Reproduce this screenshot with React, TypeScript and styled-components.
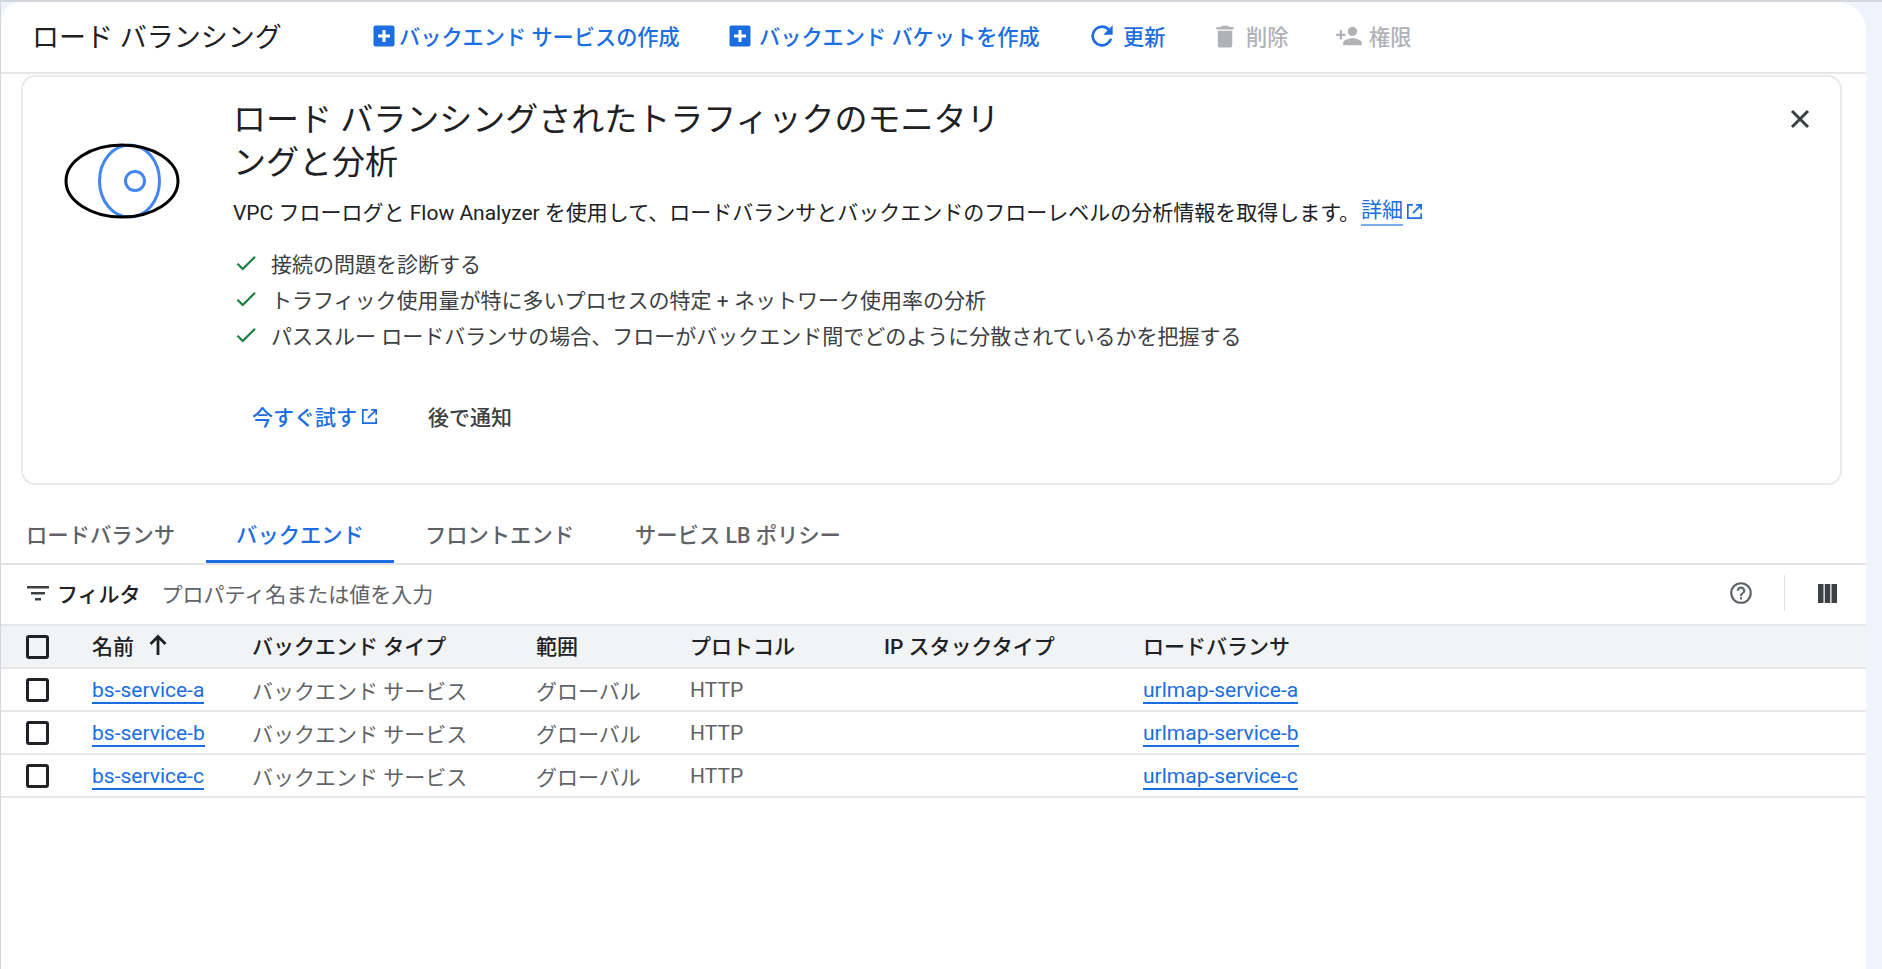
import React from 'react';
import styled, { createGlobalStyle } from 'styled-components';

const GlobalStyle = createGlobalStyle`
  html, body {
    margin: 0;
    padding: 0;
    height: 100%;
    background: #eef3fc;
    overflow: hidden;
  }
  #root {
    height: 100%;
  }
  * {
    box-sizing: border-box;
  }
`;

const FONT = `Roboto, 'Noto Sans CJK JP', sans-serif`;
const BLUE = '#1a6ee0';

const Shell = styled.div`
  height: 969px;
  border-top: 2px solid #d3d6db;
  border-left: 1px solid #d3d6db;
`;

const Page = styled.div`
  width: 1865px;
  height: 100%;
  background: #fff;
  border-top-left-radius: 20px;
  border-top-right-radius: 28px;
  font-family: ${FONT};
  color: #202124;
`;

const Header = styled.div`
  display: flex;
  align-items: center;
  height: 72px;
  padding: 0 0 3px 31px;
  border-bottom: 2px solid #e6e7e9;
`;

const PageTitle = styled.h1`
  margin: 0;
  width: 341px;
  font-size: 27px;
  font-weight: 400;
`;

const HeaderButton = styled.div<{ $disabled?: boolean; $gap?: number; $width: number }>`
  display: flex;
  align-items: center;
  width: ${(p) => p.$width}px;
  gap: ${(p) => p.$gap ?? 8}px;
  font-size: 21.2px;
  font-weight: 500;
  color: ${(p) => (p.$disabled ? '#b0b2b6' : BLUE)};
  white-space: nowrap;
`;

const Banner = styled.section`
  position: relative;
  display: flex;
  width: 1821px;
  height: 410px;
  margin: 1px 0 0 20px;
  border: 2px solid #e8eaed;
  border-radius: 14px;
`;

const EyeSlot = styled.div`
  width: 210px;
  padding: 66px 0 0 41px;
`;

const BannerBody = styled.div`
  padding-top: 21px;
`;

const BannerTitle = styled.h2`
  margin: 0;
  width: 790px;
  font-size: 33px;
  font-weight: 400;
  line-height: 43px;
`;

const Description = styled.p`
  display: flex;
  align-items: center;
  margin: 11px 0 0;
  height: 32px;
  font-size: 21px;
  white-space: nowrap;
`;

const InlineLink = styled.a`
  margin: 0 4px 0 1px;
  color: ${BLUE};
  border-bottom: 2px solid #7eaaf0;
  line-height: 27px;
`;

const CheckList = styled.ul`
  list-style: none;
  margin: 18px 0 0;
  padding: 0;
`;

const CheckItem = styled.li`
  display: flex;
  align-items: center;
  gap: 12px;
  height: 36px;
  font-size: 21px;
  color: #3c4043;
  white-space: nowrap;
`;

const ActionRow = styled.div`
  display: flex;
  align-items: center;
  margin: 45px 0 0 19px;
  height: 36px;
  font-size: 21px;
  font-weight: 500;
`;

const TryLink = styled.a`
  display: flex;
  align-items: center;
  gap: 5px;
  width: 176px;
  color: ${BLUE};
`;

const Later = styled.span`
  color: #3c4043;
`;

const CloseButton = styled.button`
  position: absolute;
  top: 32px;
  right: 30px;
  display: flex;
  padding: 0;
  border: none;
  background: none;
`;

const Tabs = styled.div`
  display: flex;
  height: 80px;
  align-items: flex-end;
  border-bottom: 2px solid #e0e2e5;
`;

const Tab = styled.div<{ $active?: boolean }>`
  display: flex;
  align-items: center;
  height: 46px;
  padding: 0 30.5px 11px;
  font-size: 21.3px;
  font-weight: 500;
  color: ${(p) => (p.$active ? BLUE : '#5f6368')};
  border-bottom: 3px solid ${(p) => (p.$active ? BLUE : 'transparent')};
  white-space: nowrap;

  &:first-child {
    padding-left: 25px;
  }
`;

const FilterBar = styled.div`
  display: flex;
  align-items: center;
  height: 59px;
  padding: 0 0 3px 25px;
`;

const FilterLabel = styled.span`
  margin-left: 7px;
  font-size: 21px;
  font-weight: 500;
`;

const FilterHint = styled.span`
  margin-left: 21px;
  font-size: 21px;
  color: #5f6368;
`;

const FilterTools = styled.div`
  display: flex;
  align-items: center;
  margin-left: auto;
  padding-right: 29px;
`;

const ToolDivider = styled.div`
  width: 1px;
  height: 36px;
  margin: 0 33px 0 30px;
  background: #e0e2e5;
`;

const Table = styled.div`
  border-top: 2px solid #e6e7e9;
`;

const rowColumns = '91px 160px 284px 154px 194px 259px 1fr';

const HeadRow = styled.div`
  display: grid;
  grid-template-columns: ${rowColumns};
  align-items: center;
  height: 43px;
  background: #f1f3f4;
  border-bottom: 2px solid #e6e7e9;
  font-size: 21px;
  font-weight: 500;
`;

const Row = styled.div`
  display: grid;
  grid-template-columns: ${rowColumns};
  align-items: center;
  height: 43px;
  border-bottom: 2px solid #e6e7e9;
  font-size: 21px;
  color: #5f6368;
`;

const HeadCell = styled.div`
  margin-bottom: 3px;
  white-space: nowrap;
`;

const NameHead = styled(HeadCell)`
  display: flex;
  align-items: center;
  gap: 14px;
`;

const CheckCell = styled.div`
  display: flex;
  padding-left: 25px;
`;

const CheckBox = styled.span`
  display: block;
  width: 23px;
  height: 24px;
  border: 3px solid #202124;
  border-radius: 3px;
`;

const RowLink = styled.a`
  justify-self: start;
  margin-top: 4px;
  color: ${BLUE};
  border-bottom: 2px solid ${BLUE};
  line-height: 23px;
`;

const PlusIcon = () => (
  <svg width="22" height="22" viewBox="0 0 22 22">
    <rect x="0.5" y="0.5" width="21" height="21" rx="2" fill={BLUE} />
    <path d="M9.5 5h3v4.5H17v3h-4.5V17h-3v-4.5H5v-3h4.5z" fill="#fff" />
  </svg>
);

const RefreshIcon = () => (
  <svg width="24" height="24" viewBox="3 3 18 18" fill={BLUE}>
    <path d="M17.65 6.35A7.96 7.96 0 0 0 12 4a8 8 0 1 0 7.73 10h-2.08A6 6 0 1 1 12 6c1.66 0 3.14.69 4.22 1.78L13 11h7V4z" />
  </svg>
);

const TrashIcon = () => (
  <svg width="22" height="29" viewBox="3 -1 18 24" fill="#b0b2b6">
    <path d="M6 19c0 1.1.9 2 2 2h8c1.1 0 2-.9 2-2V7H6zM19 4h-3.5l-1-1h-5l-1 1H5v2h14z" />
  </svg>
);

const PersonAddIcon = () => (
  <svg width="28" height="28" viewBox="0 0 24 24" fill="#b0b2b6">
    <path d="M15 12a4 4 0 1 0 0-8 4 4 0 0 0 0 8zm-9-2V7H4v3H1v2h3v3h2v-3h3v-2zm9 4c-2.67 0-8 1.34-8 4v2h16v-2c0-2.66-5.33-4-8-4z" />
  </svg>
);

const EyeArt = () => (
  <svg width="116" height="76" viewBox="0 0 116 76" fill="none">
    <ellipse cx="65.5" cy="38" rx="30" ry="36" stroke="#4285f4" strokeWidth="3" />
    <circle cx="71" cy="38" r="9.5" stroke="#4285f4" strokeWidth="3" />
    <ellipse cx="58" cy="38" rx="56" ry="36" stroke="#000" strokeWidth="3" />
  </svg>
);

const ExternalIcon = () => (
  <svg width="15" height="15" viewBox="3 3 18 18" fill="none" stroke={BLUE} strokeWidth="2">
    <path d="M10 4H4v16h16v-6" />
    <path d="M14 4h6v6M20 4 10 14" />
  </svg>
);

const Check = () => (
  <svg width="26" height="26" viewBox="0 0 24 24" fill="#188038">
    <path d="M9 16.17 4.83 12l-1.42 1.41L9 19 21 7l-1.41-1.41z" />
  </svg>
);

const CloseIcon = () => (
  <svg width="20" height="20" viewBox="0 0 20 20" stroke="#3c4043" strokeWidth="3">
    <path d="M2 2l16 16M18 2 2 18" />
  </svg>
);

const FilterIcon = () => (
  <svg width="24" height="24" viewBox="0 0 24 24" fill="#3c4043">
    <path d="M1 5h22v2.4H1zM5 11h14v2.4H5zM9 17h6v2.4H9z" />
  </svg>
);

const HelpIcon = () => (
  <svg width="26" height="26" viewBox="0 0 24 24" fill="#5f6368">
    <path d="M11 18h2v-2h-2zm1-16a10 10 0 1 0 0 20 10 10 0 0 0 0-20zm0 18a8 8 0 1 1 0-16 8 8 0 0 1 0 16zm0-14a4 4 0 0 0-4 4h2a2 2 0 1 1 4 0c0 2-3 1.75-3 5h2c0-2.25 3-2.5 3-5a4 4 0 0 0-4-4z" />
  </svg>
);

const ColumnsIcon = () => (
  <svg width="19" height="19" viewBox="0 0 19 19" fill="#3c4043">
    <path d="M0 0h5.5v19H0zM6.75 0h5.5v19h-5.5zM13.5 0H19v19h-5.5z" />
  </svg>
);

const ArrowUp = () => (
  <svg width="20" height="22" viewBox="0 0 20 22" fill="none" stroke="#202124" strokeWidth="2.8">
    <path d="M10 21V3M2.5 10 10 2.5 17.5 10" />
  </svg>
);

const CHECK_ITEMS = [
  '接続の問題を診断する',
  'トラフィック使用量が特に多いプロセスの特定 + ネットワーク使用率の分析',
  'パススルー ロードバランサの場合、フローがバックエンド間でどのように分散されているかを把握する',
];

const ROWS = [
  { name: 'bs-service-a', lb: 'urlmap-service-a' },
  { name: 'bs-service-b', lb: 'urlmap-service-b' },
  { name: 'bs-service-c', lb: 'urlmap-service-c' },
];

const App: React.FC = () => {
  return (
    <Shell>
      <GlobalStyle />
      <Page>
        <Header>
          <PageTitle>ロード バランシング</PageTitle>
          <HeaderButton $width={356} $gap={4}>
            <PlusIcon />
            バックエンド サービスの作成
          </HeaderButton>
          <HeaderButton $width={361}>
            <PlusIcon />
            バックエンド バケットを作成
          </HeaderButton>
          <HeaderButton $width={124} $gap={9}>
            <RefreshIcon />
            更新
          </HeaderButton>
          <HeaderButton $width={121} $disabled $gap={10}>
            <TrashIcon />
            削除
          </HeaderButton>
          <HeaderButton $width={100} $disabled $gap={6}>
            <PersonAddIcon />
            権限
          </HeaderButton>
        </Header>
        <Banner>
          <EyeSlot>
            <EyeArt />
          </EyeSlot>
          <BannerBody>
            <BannerTitle>ロード バランシングされたトラフィックのモニタリングと分析</BannerTitle>
            <Description>
              VPC フローログと Flow Analyzer を使用して、ロードバランサとバックエンドのフローレベルの分析情報を取得します。
              <InlineLink>詳細</InlineLink>
              <ExternalIcon />
            </Description>
            <CheckList>
              {CHECK_ITEMS.map((item) => (
                <CheckItem key={item}>
                  <Check />
                  {item}
                </CheckItem>
              ))}
            </CheckList>
            <ActionRow>
              <TryLink>
                今すぐ試す
                <ExternalIcon />
              </TryLink>
              <Later>後で通知</Later>
            </ActionRow>
          </BannerBody>
          <CloseButton>
            <CloseIcon />
          </CloseButton>
        </Banner>
        <Tabs>
          <Tab>ロードバランサ</Tab>
          <Tab $active>バックエンド</Tab>
          <Tab>フロントエンド</Tab>
          <Tab>サービス LB ポリシー</Tab>
        </Tabs>
        <FilterBar>
          <FilterIcon />
          <FilterLabel>フィルタ</FilterLabel>
          <FilterHint>プロパティ名または値を入力</FilterHint>
          <FilterTools>
            <HelpIcon />
            <ToolDivider />
            <ColumnsIcon />
          </FilterTools>
        </FilterBar>
        <Table>
          <HeadRow>
            <CheckCell>
              <CheckBox />
            </CheckCell>
            <NameHead>
              名前
              <ArrowUp />
            </NameHead>
            <HeadCell>バックエンド タイプ</HeadCell>
            <HeadCell>範囲</HeadCell>
            <HeadCell>プロトコル</HeadCell>
            <HeadCell>IP スタックタイプ</HeadCell>
            <HeadCell>ロードバランサ</HeadCell>
          </HeadRow>
          {ROWS.map((r) => (
            <Row key={r.name}>
              <CheckCell>
                <CheckBox />
              </CheckCell>
              <RowLink>{r.name}</RowLink>
              <div>バックエンド サービス</div>
              <div>グローバル</div>
              <div>HTTP</div>
              <div />
              <RowLink>{r.lb}</RowLink>
            </Row>
          ))}
        </Table>
      </Page>
    </Shell>
  );
};

export default App;
